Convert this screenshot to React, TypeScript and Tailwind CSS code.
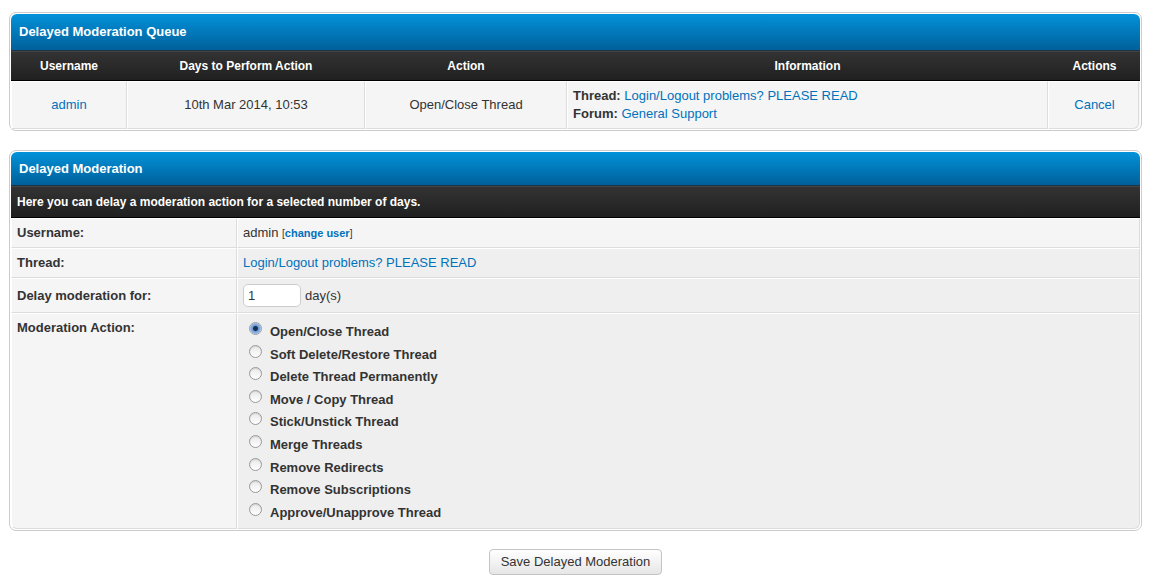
import { useState } from "react";

const actions = [
  "Open/Close Thread",
  "Soft Delete/Restore Thread",
  "Delete Thread Permanently",
  "Move / Copy Thread",
  "Stick/Unstick Thread",
  "Merge Threads",
  "Remove Redirects",
  "Remove Subscriptions",
  "Approve/Unapprove Thread",
];

const thead =
  "bg-[linear-gradient(to_bottom,#0392da,#00609a)] border-b border-[#1d3344] text-white font-bold text-[13px]";
const tcat =
  "bg-[linear-gradient(to_bottom,#333333,#202020)] border-t border-[#444] border-b border-b-black text-white font-bold text-[12px]";
const cell = "border border-t-white border-l-white border-r-[#ddd] border-b-[#ddd]";

function Radio({ checked }: { checked: boolean }) {
  return (
    <span className="inline-flex items-center justify-center w-[13px] h-[13px] rounded-full border border-[#9a9a9a] bg-[linear-gradient(to_bottom,#e8e8e8,#ffffff)] shadow-[inset_0_1px_1px_rgba(0,0,0,0.1)]">
      {checked && (
        <span className="w-[11px] h-[11px] rounded-full bg-[radial-gradient(circle,#1b2f4f_0,#1b2f4f_2px,#6d9ad5_3px,#a9c6ec_6px)]" />
      )}
    </span>
  );
}

export default function App() {
  const [selected, setSelected] = useState(0);

  return (
    <div className="min-h-[582px] bg-white px-[9px] pt-[12px] font-['Liberation_Sans',Arial,sans-serif] text-[13px] text-[#333]">
      {/* Queue */}
      <div className="w-[1133px] border border-[#ccc] rounded-[7px] p-px bg-white">
        <div className={`${thead} h-[37px] rounded-t-[6px] flex items-center px-[8px]`}>
          Delayed Moderation Queue
        </div>
        <div className={`${tcat} h-[30px] flex items-center text-center`}>
          <div className="w-[116px]">Username</div>
          <div className="w-[238px]">Days to Perform Action</div>
          <div className="w-[202px]">Action</div>
          <div className="w-[481px]">Information</div>
          <div className="w-[91px] pl-[2px]">Actions</div>
        </div>
        <div className="flex bg-[#f5f5f5] h-[48px] leading-[18px] rounded-b-[6px]">
          <div className={`${cell} w-[116px] flex items-center justify-center text-[#0072bc]`}>admin</div>
          <div className={`${cell} w-[238px] flex items-center justify-center`}>10th Mar 2014, 10:53</div>
          <div className={`${cell} w-[202px] flex items-center justify-center`}>Open/Close Thread</div>
          <div className={`${cell} w-[481px] px-[5px] py-[5px]`}>
            <div>
              <b>Thread:</b> <span className="text-[#0072bc]">Login/Logout problems? PLEASE READ</span>
            </div>
            <div>
              <b>Forum:</b> <span className="text-[#0072bc]">General Support</span>
            </div>
          </div>
          <div className={`${cell} w-[91px] flex items-center justify-center pl-[2px] text-[#0072bc] rounded-br-[6px]`}>
            Cancel
          </div>
        </div>
      </div>

      {/* Delayed moderation form */}
      <div className="w-[1133px] mt-[19px] border border-[#ccc] rounded-[7px] p-px bg-white">
        <div className={`${thead} h-[34px] rounded-t-[6px] flex items-center px-[8px]`}>Delayed Moderation</div>
        <div className={`${tcat} h-[32px] flex items-center px-[6px]`}>
          Here you can delay a moderation action for a selected number of days.
        </div>
        <div className="grid grid-cols-[226px_1fr] leading-[18px]">
          <div className={`${cell} bg-[#f5f5f5] h-[30px] px-[5px] flex items-center font-bold`}>Username:</div>
          <div className={`${cell} bg-[#f5f5f5] h-[30px] px-[5px] flex items-center`}>
            admin&nbsp;
            <span className="text-[10px]">
              [<span className="text-[#0072bc] font-bold text-[11px]">change user</span>]
            </span>
          </div>

          <div className={`${cell} bg-[#f5f5f5] h-[30px] px-[5px] flex items-center font-bold`}>Thread:</div>
          <div className={`${cell} bg-[#efefef] h-[30px] px-[5px] flex items-center text-[#0072bc]`}>
            Login/Logout problems? PLEASE READ
          </div>

          <div className={`${cell} bg-[#f5f5f5] h-[35px] px-[5px] flex items-center font-bold`}>
            Delay moderation for:
          </div>
          <div className={`${cell} bg-[#efefef] h-[35px] px-[5px] flex items-center gap-[4px]`}>
            <input
              defaultValue="1"
              className="w-[58px] h-[23px] rounded-[5px] border border-[#ccc] bg-white px-[4px] text-[13px] text-[#333] outline-none"
            />
            day(s)
          </div>

          <div className={`${cell} bg-[#f5f5f5] h-[216px] px-[5px] pt-[5px] font-bold rounded-bl-[6px]`}>
            Moderation Action:
          </div>
          <div className={`${cell} bg-[#efefef] h-[216px] px-[5px] pt-[5px] rounded-br-[6px]`}>
            {actions.map((a, i) => (
              <div
                key={a}
                onClick={() => setSelected(i)}
                className="h-[22.6px] flex items-start gap-[8px] pl-[6px] cursor-pointer"
              >
                <span className="mt-[3px] flex">
                  <Radio checked={selected === i} />
                </span>
                <span className="font-bold mt-[4px]">{a}</span>
              </div>
            ))}
          </div>
        </div>
      </div>

      <div className="flex justify-center mt-[18px] w-[1133px]">
        <button className="h-[26px] w-[173px] rounded-[4px] border border-[#c4c4c4] bg-[linear-gradient(to_bottom,#ffffff,#e6e6e6)] text-[13px] text-[#333] font-['Liberation_Sans',Arial,sans-serif]">
          Save Delayed Moderation
        </button>
      </div>
    </div>
  );
}
